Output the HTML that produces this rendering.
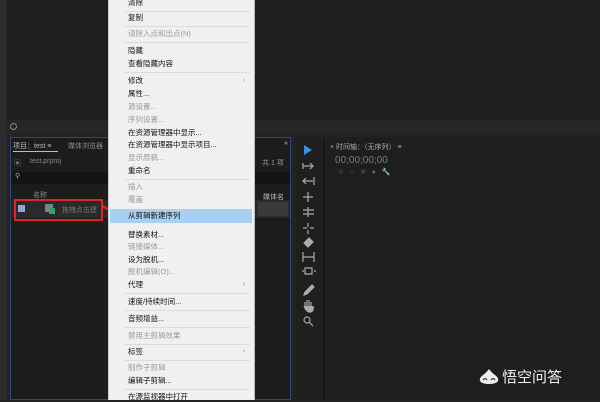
<!DOCTYPE html>
<html><head><meta charset="utf-8"><style>
*{margin:0;padding:0;box-sizing:border-box}
body{width:600px;height:400px;background:#232323;position:relative;overflow:hidden;font-family:"Liberation Sans","Noto Sans CJK SC",sans-serif}
.a{position:absolute}
.mi{position:absolute;left:128px;font-size:7.5px;color:#111;line-height:10px;white-space:nowrap}
.d{color:#9a9a9a}
.sep{position:absolute;left:124px;width:126px;height:1px;background:#dcdcdc}
.arr{position:absolute;left:243px;font-size:7px;color:#888}
.t{color:#8a8a8a;font-size:7px;position:absolute;white-space:nowrap}
</style></head><body>
<div class="a" style="left:7px;top:0;width:593px;height:120px;background:#1e1e1e"></div>
<div class="a" style="left:0;top:0;width:7px;height:400px;background:#2c2c2c"></div>
<div class="a" style="left:7px;top:120px;width:593px;height:14px;background:#262626"></div>
<div class="a" style="left:10px;top:123px;width:7px;height:7px;border:1.5px solid #888;border-radius:50%"></div>
<div class="a" style="left:10px;top:137px;width:281px;height:263px;background:#1c1c1c;border:1px solid #2b4a7a"></div>
<div class="t" style="left:13px;top:141px;color:#bbb">项目：test ≡</div>
<div class="a" style="left:13px;top:151px;width:45px;height:1px;background:#bbb"></div>
<div class="t" style="left:68px;top:141px">媒体浏览器</div>
<div class="t" style="left:14px;top:158px">▣</div>
<div class="t" style="left:30px;top:158px">test.prproj</div>
<div class="a" style="left:12px;top:172px;width:278px;height:12px;background:#141414"></div>
<div class="t" style="left:15px;top:172px;color:#aaa">⚲</div>
<div class="t" style="left:33px;top:190px">名称</div>
<div class="a" style="left:12px;top:200px;width:278px;height:18px;background:#2a2a2a"></div>
<div class="a" style="left:18px;top:205px;width:7px;height:7px;background:#8aa8d8"></div>
<div class="a" style="left:45px;top:204px;width:8px;height:8px;background:#6a8a8a"></div>
<div class="a" style="left:49px;top:208px;width:6px;height:6px;background:#3aa060"></div>
<div class="t" style="left:62px;top:205px;color:#777">拖拽点击建</div>
<div class="a" style="left:14px;top:199px;width:89px;height:22px;border:2.5px solid #e02424"></div>
<svg class="a" style="left:100px;top:202px" width="30" height="22"><path d="M2 4 L22 14" stroke="#e02424" stroke-width="2.5"/><path d="M16 16 L27 17 L21 8 Z" fill="#e02424"/></svg>
<div class="t" style="left:262px;top:158px;color:#999">共 1 项</div>
<div class="t" style="left:263px;top:192px;color:#bbb">媒体名</div>
<div class="a" style="left:258px;top:202px;width:30px;height:14px;background:#3a3a3a"></div>
<div class="t" style="left:284px;top:140px;color:#bbb">»</div>
<div class="a" style="left:296px;top:137px;width:26px;height:263px;background:#1f1f1f"></div>
<div class="a" style="left:323px;top:137px;width:2px;height:263px;background:#151515"></div>
<svg class="a" style="left:300px;top:140px" width="20" height="190" fill="none" stroke="#aaa" stroke-width="1.2">
<path d="M4 5 L12 10 L4 15Z" fill="#3b8ff0" stroke="none"/>
<path d="M3 26h10m-3-3l3 3-3 3M3 23v6"/>
<path d="M3 41h10M6 38l-3 3 3 3M14 37v8"/>
<path d="M8 52v10M3 57h10"/>
<path d="M3 70h11M3 74h11M8 67v10"/>
<path d="M3 88h4m3 0h4M8 83v4m0 3v4"/>
<path d="M4 103l5-5 4 4-5 5z" fill="#aaa"/>
<path d="M3 112v10M14 112v10M3 117h11"/>
<path d="M5 128h7v6H5zM2 131h2m10 0h2"/>
<path d="M5 152l7-7 2 2-7 7-3 1z" fill="#aaa"/>
<path d="M5 168v-6m2 5v-7m2 7v-7m2 7v-5M4 166q2 6 6 6t3-6" fill="#aaa"/>
<circle cx="7" cy="180" r="3"/><path d="M9 182l4 4"/>
</svg>
<div class="a" style="left:326px;top:137px;width:274px;height:263px;background:#1e1e1e"></div>
<div class="t" style="left:330px;top:142px;color:#aaa">× 时间轴：（无序列） ≡</div>
<div class="t" style="left:335px;top:155px;font-size:10px;color:#7a7a7a">00;00;00;00</div>
<div class="t" style="left:338px;top:168px;color:#666">⟐ &nbsp; ∩ &nbsp; ◈ &nbsp; ● &nbsp; <span style="color:#bbb">🔧</span></div>
<div class="a" style="left:108px;top:0;width:147px;height:400px;background:#f0f0f0;border-left:1px solid #ccc;border-right:1px solid #bbb"></div>
<div class="a" style="left:110px;top:209px;width:142px;height:14px;background:#a8d0f2"></div>
<div class="mi" style="top:-2px">清除</div>
<div class="sep" style="top:11px"></div>
<div class="mi" style="top:13px">复制</div>
<div class="sep" style="top:26px"></div>
<div class="mi d" style="top:29px">请除入点和出点(N)</div>
<div class="sep" style="top:42px"></div>
<div class="mi" style="top:46px">隐藏</div>
<div class="mi" style="top:59px">查看隐藏内容</div>
<div class="sep" style="top:72px"></div>
<div class="mi" style="top:76px">修改</div><div class="arr" style="top:77px">›</div>
<div class="mi" style="top:89px">属性...</div>
<div class="mi d" style="top:102px">源设置...</div>
<div class="mi d" style="top:115px">序列设置...</div>
<div class="mi" style="top:128px">在资源管理器中显示...</div>
<div class="mi" style="top:140px">在资源管理器中显示项目...</div>
<div class="mi d" style="top:153px">显示原稿...</div>
<div class="mi" style="top:166px">重命名</div>
<div class="sep" style="top:179px"></div>
<div class="mi d" style="top:182px">插入</div>
<div class="mi d" style="top:195px">覆盖</div>
<div class="mi" style="top:211px">从剪辑新建序列</div>
<div class="mi" style="top:230px">替换素材...</div>
<div class="mi d" style="top:242px">链接媒体...</div>
<div class="mi" style="top:255px">设为脱机...</div>
<div class="mi d" style="top:267px">脱机编辑(O)...</div>
<div class="mi" style="top:280px">代理</div><div class="arr" style="top:281px">›</div>
<div class="sep" style="top:293px"></div>
<div class="mi" style="top:297px">速度/持续时间...</div>
<div class="sep" style="top:310px"></div>
<div class="mi" style="top:314px">音频增益...</div>
<div class="sep" style="top:327px"></div>
<div class="mi d" style="top:331px">禁用主剪辑效果</div>
<div class="sep" style="top:344px"></div>
<div class="mi" style="top:347px">标签</div><div class="arr" style="top:348px">›</div>
<div class="sep" style="top:360px"></div>
<div class="mi d" style="top:363px">制作子剪辑</div>
<div class="mi" style="top:376px">编辑子剪辑...</div>
<div class="sep" style="top:389px"></div>
<div class="mi" style="top:392px">在源监视器中打开</div>
<svg class="a" style="left:479px;top:368px" width="20" height="17"><path d="M10 1 Q13 5 16 7 Q20 10 19 13 Q17 16 10 16 Q3 16 1 13 Q0 10 4 7 Q7 5 10 1Z" fill="#eee"/><path d="M4 12q2-3 4 0M12 12q2-3 4 0" stroke="#333" stroke-width="1.3" fill="none"/></svg>
<div class="a" style="left:502px;top:367px;font-size:15px;color:#f2f2f2;font-family:'Noto Sans CJK SC',sans-serif;line-height:19px">悟空问答</div>
</body></html>
